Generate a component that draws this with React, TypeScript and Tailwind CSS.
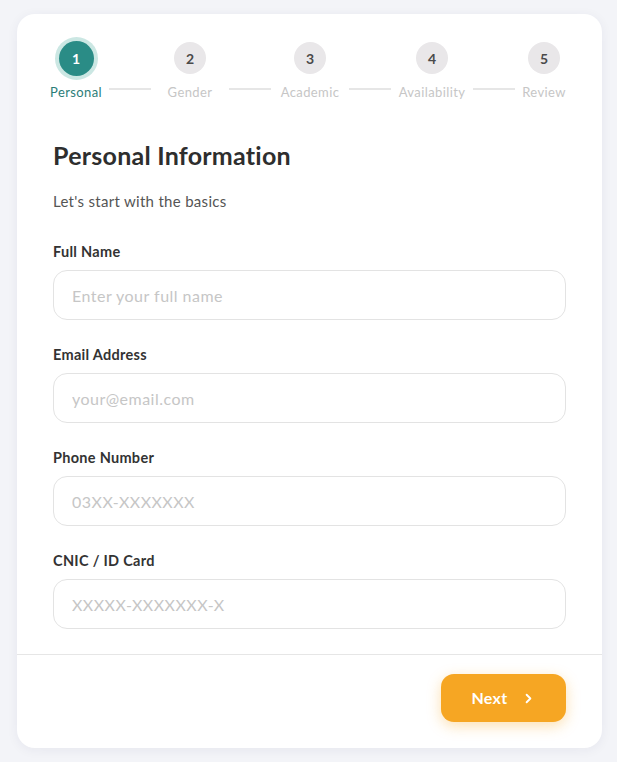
import { ChevronRight } from "lucide-react";

const steps = [
  { n: 1, label: "Personal", w: "w-[52px]" },
  { n: 2, label: "Gender", w: "w-[64px]" },
  { n: 3, label: "Academic", w: "w-[64px]" },
  { n: 4, label: "Availability", w: "w-[68px]" },
  { n: 5, label: "Review", w: "w-[44px]" },
];

const fields = [
  { label: "Full Name", placeholder: "Enter your full name", type: "text" },
  { label: "Email Address", placeholder: "your@email.com", type: "email" },
  { label: "Phone Number", placeholder: "03XX-XXXXXXX", type: "tel" },
  { label: "CNIC / ID Card", placeholder: "XXXXX-XXXXXXX-X", type: "text" },
];

function Stepper({ current }: { current: number }) {
  return (
    <div className="flex px-[33px] pr-[36px] pt-[28px]">
      {steps.map((s, i) => {
        const active = s.n === current;
        return (
          <div key={s.n} className="contents">
            {i > 0 && (
              <div className="mx-[7px] mb-[11px] h-[2px] flex-1 self-end bg-[#e6e6e6]" />
            )}
            <div className={`flex shrink-0 flex-col items-center ${s.w}`}>
              <div className="flex h-[32px] items-center justify-center">
                {active ? (
                  <div className="flex h-[35px] w-[35px] items-center justify-center rounded-full bg-[#2a8c86] text-[14px] font-bold text-white ring-4 ring-[#cbe7e3]">
                    {s.n}
                  </div>
                ) : (
                  <div className="flex h-[32px] w-[32px] items-center justify-center rounded-full bg-[#e9e7e9] text-[14px] font-bold text-[#4a4a4a]">
                    {s.n}
                  </div>
                )}
              </div>
              <span
                className={`mt-[9px] whitespace-nowrap text-[13px] leading-[18px] tracking-[0.03em] ${
                  active ? "text-[#2b7d78]" : "text-[#c6c6c6]"
                }`}
              >
                {s.label}
              </span>
            </div>
          </div>
        );
      })}
    </div>
  );
}

export default function App() {
  return (
    <main
      className="min-h-screen bg-[#f3f4f8] pl-[17px] pr-[15px] pt-[14px]"
      style={{ fontFamily: "Lato, 'Noto Sans', sans-serif" }}
    >
      <div className="rounded-[18px] bg-white shadow-[0_2px_12px_rgba(30,40,80,0.06)]">
        <Stepper current={1} />
        <div className="px-[36px]">
          <h1 className="mt-[38px] text-[25px] font-bold leading-[32px] tracking-[0.01em] text-[#2e2e2e]">
            Personal Information
          </h1>
          <p className="mt-[19px] text-[15px] leading-[22px] tracking-[0.02em] text-[#555]">
            Let's start with the basics
          </p>
          <div className="mt-[30px] flex flex-col gap-[25px]">
            {fields.map((f) => (
              <label key={f.label} className="flex flex-col">
                <span className="text-[14.5px] font-bold leading-[20px] tracking-[0.02em] text-[#333]">
                  {f.label}
                </span>
                <input
                  type={f.type}
                  placeholder={f.placeholder}
                  className="mt-[8px] h-[50px] rounded-[14px] border border-[#e3e3e3] px-[18px] text-[16px] tracking-[0.03em] text-[#333] outline-none placeholder:text-[#c6c6c6]"
                />
              </label>
            ))}
          </div>
        </div>
        <div className="mt-[25px] border-t border-[#e6e6e6] px-[36px] pb-[26px] pt-[19px]">
          <div className="flex justify-end">
            <button className="flex h-[48px] w-[125px] items-center justify-center gap-[13px] rounded-[13px] bg-[#f6a623] text-[16px] font-bold tracking-[0.02em] text-white shadow-[0_4px_14px_rgba(246,166,35,0.35)]">
              Next
              <ChevronRight size={15} strokeWidth={3} />
            </button>
          </div>
        </div>
      </div>
    </main>
  );
}
